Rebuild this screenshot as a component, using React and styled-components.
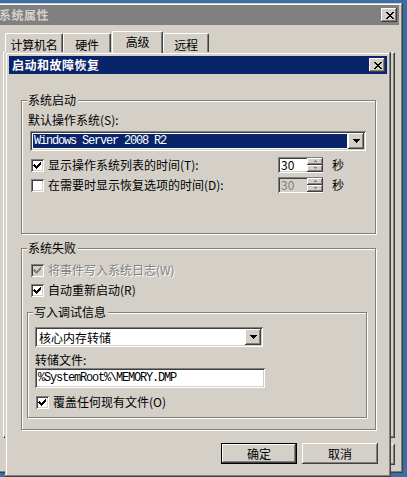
import styled, { createGlobalStyle } from 'styled-components';

const FACE = '#d4d0c8';
const NAVY = '#0a246a';
const UI_FONT = `"Noto Sans CJK SC", "Liberation Sans", sans-serif`;
const MONO_FONT = `"Liberation Mono", "Noto Sans CJK SC", monospace`;

const raised = `
    box-shadow: inset -1px -1px #404040, inset 1px 1px #fff, inset -2px -2px #808080, inset 2px 2px ${FACE};
`;

const frame = `
    box-shadow: inset -1px -1px #404040, inset 1px 1px ${FACE}, inset -2px -2px #808080, inset 2px 2px #fff;
`;

const sunken = `
    box-shadow: inset 1px 1px #808080, inset -1px -1px #fff, inset 2px 2px #404040, inset -2px -2px ${FACE};
`;

// classic 8x7 close cross, one pixel per cell
const crossRows = ['11000011', '01100110', '00111100', '00011000', '00111100', '01100110', '11000011'];
const crossPath = crossRows
    .map((row, y) => row.split('').map((c, x) => (c === '1' ? `M${x} ${y}h1v1h-1z` : '')).join(''))
    .join('');

function CloseGlyph () {
    return (
        <svg width="8" height="7" viewBox="0 0 8 7" shapeRendering="crispEdges">
            <path d={crossPath} fill="#000" />
        </svg>
    );
}

function DownArrow () {
    return (
        <svg width="7" height="4" viewBox="0 0 7 4" shapeRendering="crispEdges">
            <path d="M0 0h7v1h-1v1h-1v1h-1v1h-1v-1h-1v-1h-1v-1h-1z" fill="#000" />
        </svg>
    );
}

function SpinArrow ({ up }) {
    return (
        <svg width="5" height="3" viewBox="0 0 5 3" shapeRendering="crispEdges">
            <path d={up ? 'M2 0h1v1h1v1h-3v-1h1z' : 'M1 0h3v1h-1v1h-1v-1h-1z'} fill="#808080" />
        </svg>
    );
}

function CheckBox ({ checked, disabled }) {
    return (
        <Box $disabled={disabled}>
            {checked && (
                <svg width="13" height="13" viewBox="0 0 13 13" shapeRendering="crispEdges">
                    <path
                        d="M3 5h1v1h1v1h1v-1h1v-1h1v-1h1v-1h1v3h-1v1h-1v1h-1v1h-1v1h-1v-1h-1v-1h-1v-1h-1z"
                        fill={disabled ? '#808080' : '#000'}
                    />
                </svg>
            )}
        </Box>
    );
}

function CheckRow ({ checked, disabled, children, $mt, $ml }) {
    return (
        <Row $mt={$mt} $ml={$ml}>
            <CheckBox checked={checked} disabled={disabled} />
            <CheckText $disabled={disabled}>{children}</CheckText>
        </Row>
    );
}

function SpinBox ({ value, disabled }) {
    return (
        <Spin $disabled={disabled}>
            <SpinValue $disabled={disabled}>{value}</SpinValue>
            <SpinButtons>
                <SpinButton><SpinArrow up /></SpinButton>
                <SpinButton><SpinArrow /></SpinButton>
            </SpinButtons>
        </Spin>
    );
}

function Select ({ value, width, selected }) {
    return (
        <SelectBox $width={width}>
            <SelectValue $selected={selected}>{value}</SelectValue>
            <DropButton><DownArrow /></DropButton>
        </SelectBox>
    );
}

const tabs = [
    { label: '计算机名', width: 58 },
    { label: '硬件', width: 48 },
    { label: '高级', width: 51, selected: true },
    { label: '远程', width: 46 },
];

function App () {
    return (
        <>
            <GlobalStyle />
            <Desktop>
                <OuterWindow>
                    <TitleBar>
                        <TitleText>系统属性</TitleText>
                        <CloseButton><CloseGlyph /></CloseButton>
                    </TitleBar>
                    <TabStrip>
                        {tabs.map((t) => (
                            <Tab key={t.label} $width={t.width} $selected={t.selected}>{t.label}</Tab>
                        ))}
                    </TabStrip>
                    <TabPanel />
                    {/* the outer sheet's own buttons sit behind the dialog, only an edge shows */}
                    <OuterButtons>
                        <Button />
                        <Button />
                        <Button />
                    </OuterButtons>
                </OuterWindow>

                <Dialog>
                    <TitleBar $active>
                        <TitleText $active>启动和故障恢复</TitleText>
                        <CloseButton><CloseGlyph /></CloseButton>
                    </TitleBar>
                    <DialogBody>
                        <Group $height={134} $mt={26} $pt={12} $pl={6}>
                            <Legend>系统启动</Legend>
                            <FieldLabel>默认操作系统(S):</FieldLabel>
                            <SelectWrap $mt={5} $ml={2}>
                                <Select value="Windows Server 2008 R2" width={336} selected />
                            </SelectWrap>
                            <Row $mt={6} $ml={3}>
                                <CheckBox checked />
                                <CheckText $width={230}>显示操作系统列表的时间(T):</CheckText>
                                <SpinBox value="30" />
                                <Unit>秒</Unit>
                            </Row>
                            <Row $mt={4} $ml={3}>
                                <CheckBox />
                                <CheckText $width={230}>在需要时显示恢复选项的时间(D):</CheckText>
                                <SpinBox value="30" disabled />
                                <Unit>秒</Unit>
                            </Row>
                        </Group>

                        <Group $height={182} $mt={14} $pt={13} $pl={6}>
                            <Legend>系统失败</Legend>
                            <CheckRow checked disabled $ml={3}>将事件写入系统日志(W)</CheckRow>
                            <CheckRow checked $mt={4} $ml={3}>自动重新启动(R)</CheckRow>
                            <Group $height={106} $width={340} $mt={14} $pt={14} $pl={7} $ml={-1}>
                                <Legend>写入调试信息</Legend>
                                <Select value="核心内存转储" width={228} />
                                <FieldLabel $mt={6}>转储文件:</FieldLabel>
                                <PathField>%SystemRoot%\MEMORY.DMP</PathField>
                                <CheckRow checked $mt={6} $ml={1}>覆盖任何现有文件(O)</CheckRow>
                            </Group>
                        </Group>

                        <ButtonRow>
                            <Button $default>确定</Button>
                            <Button>取消</Button>
                        </ButtonRow>
                    </DialogBody>
                </Dialog>
            </Desktop>
        </>
    );
}

export default App;

const GlobalStyle = createGlobalStyle`

    html, body {
        margin: 0;
        padding: 0;
        overflow: hidden;
        background: #3a6ea5;
    }

    * {
        box-sizing: border-box;
    }

`;

const Desktop = styled.div`

    position: relative;
    width: 407px;
    height: 477px;
    overflow: hidden;
    background: #3a6ea5;
    font-family: ${UI_FONT};
    font-size: 12px;
    color: #000;

`;

const OuterWindow = styled.div`

    position: absolute;
    left: -8px;
    top: 3px;
    width: 411px;
    height: 470px;
    display: flex;
    flex-direction: column;
    padding: 2px 4px 4px 4px;
    background: ${FACE};
    ${frame}

`;

const Dialog = styled.div`

    position: absolute;
    left: 5px;
    top: 52px;
    width: 386px;
    height: 425px;
    display: flex;
    flex-direction: column;
    padding: 4px;
    background: ${FACE};
    ${frame}

`;

const TitleBar = styled.div`

    height: ${(p) => (p.$active ? 18 : 20)}px;
    flex-shrink: 0;
    display: flex;
    align-items: center;
    justify-content: space-between;
    padding: 0 2px 0 3px;
    background: ${(p) => (p.$active ? NAVY : '#808080')};

`;

const TitleText = styled.div`

    font-weight: 700;
    font-size: 12px;
    line-height: 14px;
    letter-spacing: 0.5px;
    white-space: nowrap;
    color: ${(p) => (p.$active ? '#fff' : FACE)};

`;

const CloseButton = styled.div`

    width: 16px;
    height: 14px;
    display: flex;
    align-items: center;
    justify-content: center;
    padding-left: 1px;
    background: ${FACE};
    ${raised}

`;

const TabStrip = styled.div`

    height: 21px;
    margin-top: 6px;
    padding-left: 9px;
    display: flex;
    align-items: flex-end;
    position: relative;
    z-index: 1;

`;

const Tab = styled.div`

    width: ${(p) => p.$width}px;
    height: ${(p) => (p.$selected ? 22 : 19)}px;
    margin-left: ${(p) => (p.$selected ? 1 : 0)}px;
    margin-bottom: ${(p) => (p.$selected ? -1 : 0)}px;
    padding-top: ${(p) => (p.$selected ? 3 : 4)}px;
    display: flex;
    justify-content: center;
    background: ${FACE};
    border-top: 1px solid #fff;
    border-left: 1px solid #fff;
    border-right: 1px solid #404040;
    border-radius: 2px 2px 0 0;
    box-shadow: inset -1px 0 #808080;
    font-size: 12px;
    line-height: 13px;
    letter-spacing: -0.3px;
    white-space: nowrap;
    overflow: hidden;

`;

const TabPanel = styled.div`

    height: 386px;
    width: 392px;
    margin-left: 7px;
    background: ${FACE};
    border-top: 1px solid #fff;
    border-left: 1px solid #fff;
    border-right: 1px solid #404040;
    border-bottom: 1px solid #404040;
    box-shadow: inset -1px -1px #808080;

`;

const OuterButtons = styled.div`

    display: flex;
    justify-content: flex-end;
    gap: 6px;
    margin-top: 6px;
    padding-right: 4px;

`;

const DialogBody = styled.div`

    flex: 1;
    display: flex;
    flex-direction: column;
    padding: 0 9px 0 12px;

`;

const Group = styled.div`

    position: relative;
    width: ${(p) => p.$width || 355}px;
    height: ${(p) => p.$height}px;
    flex-shrink: 0;
    margin-top: ${(p) => p.$mt || 0}px;
    margin-left: ${(p) => p.$ml || 0}px;
    padding: ${(p) => p.$pt}px 0 0 ${(p) => p.$pl}px;
    display: flex;
    flex-direction: column;
    align-items: flex-start;
    border: 1px solid #808080;
    box-shadow: inset 1px 1px #fff, 1px 1px #fff;

`;

const Legend = styled.div`

    position: absolute;
    top: -8px;
    left: 5px;
    padding: 0 2px 0 1px;
    background: ${FACE};
    line-height: 14px;

`;

const FieldLabel = styled.div`

    margin-top: ${(p) => p.$mt || 0}px;
    height: 13px;
    line-height: 13px;
    white-space: nowrap;

`;

const SelectWrap = styled.div`

    margin-top: ${(p) => p.$mt || 0}px;
    margin-left: ${(p) => p.$ml || 0}px;

`;

const SelectBox = styled.div`

    width: ${(p) => p.$width}px;
    height: 20px;
    display: flex;
    align-items: stretch;
    padding: 2px;
    background: #fff;
    ${sunken}

`;

const SelectValue = styled.div`

    flex: 1;
    margin: 1px;
    padding-left: 1px;
    display: flex;
    align-items: center;
    background: ${(p) => (p.$selected ? NAVY : '#fff')};
    color: ${(p) => (p.$selected ? '#fff' : '#000')};
    font-family: ${(p) => (p.$selected ? MONO_FONT : UI_FONT)};
    letter-spacing: ${(p) => (p.$selected ? '-1.2px' : '0')};
    white-space: nowrap;

`;

const DropButton = styled.div`

    width: 16px;
    display: flex;
    align-items: center;
    justify-content: center;
    background: ${FACE};
    ${raised}

`;

const PathField = styled.div`

    width: 230px;
    height: 20px;
    margin-top: 2px;
    padding: 0 3px;
    display: flex;
    align-items: center;
    background: #fff;
    font-family: ${MONO_FONT};
    letter-spacing: -1.2px;
    white-space: nowrap;
    ${sunken}

`;

const Row = styled.div`

    height: 16px;
    margin-top: ${(p) => p.$mt || 0}px;
    margin-left: ${(p) => p.$ml || 0}px;
    display: flex;
    align-items: center;

`;

const Box = styled.div`

    width: 13px;
    height: 13px;
    flex-shrink: 0;
    background: ${(p) => (p.$disabled ? FACE : '#fff')};
    ${sunken}

    svg {
        display: block;
    }

`;

const CheckText = styled.div`

    width: ${(p) => (p.$width ? `${p.$width}px` : 'auto')};
    margin-left: 4px;
    line-height: 14px;
    white-space: nowrap;
    color: ${(p) => (p.$disabled ? '#808080' : '#000')};
    text-shadow: ${(p) => (p.$disabled ? '1px 1px #fff' : 'none')};

`;

const Spin = styled.div`

    width: 45px;
    height: 16px;
    display: flex;
    padding: 2px 0 2px 2px;
    background: ${(p) => (p.$disabled ? FACE : '#fff')};
    ${sunken}

`;

const SpinValue = styled.div`

    flex: 1;
    padding-left: 1px;
    line-height: 12px;
    font-family: ${UI_FONT};
    color: ${(p) => (p.$disabled ? '#808080' : '#000')};

`;

const SpinButtons = styled.div`

    width: 16px;
    margin-top: -1px;
    margin-bottom: -1px;
    display: flex;
    flex-direction: column;

`;

const SpinButton = styled.div`

    flex: 1;
    display: flex;
    align-items: center;
    justify-content: center;
    background: ${FACE};
    ${raised}

`;

const Unit = styled.div`

    margin-left: 9px;
    line-height: 14px;

`;

const ButtonRow = styled.div`

    display: flex;
    justify-content: flex-end;
    gap: 5px;
    margin-top: 13px;

`;

const Button = styled.div`

    width: 76px;
    height: 21px;
    display: flex;
    align-items: center;
    justify-content: center;
    background: ${FACE};
    line-height: 14px;
    ${(p) => (p.$default
        ? `border: 1px solid #000; box-shadow: inset -1px -1px #404040, inset 1px 1px #fff, inset -2px -2px #808080;`
        : raised)}

`;
